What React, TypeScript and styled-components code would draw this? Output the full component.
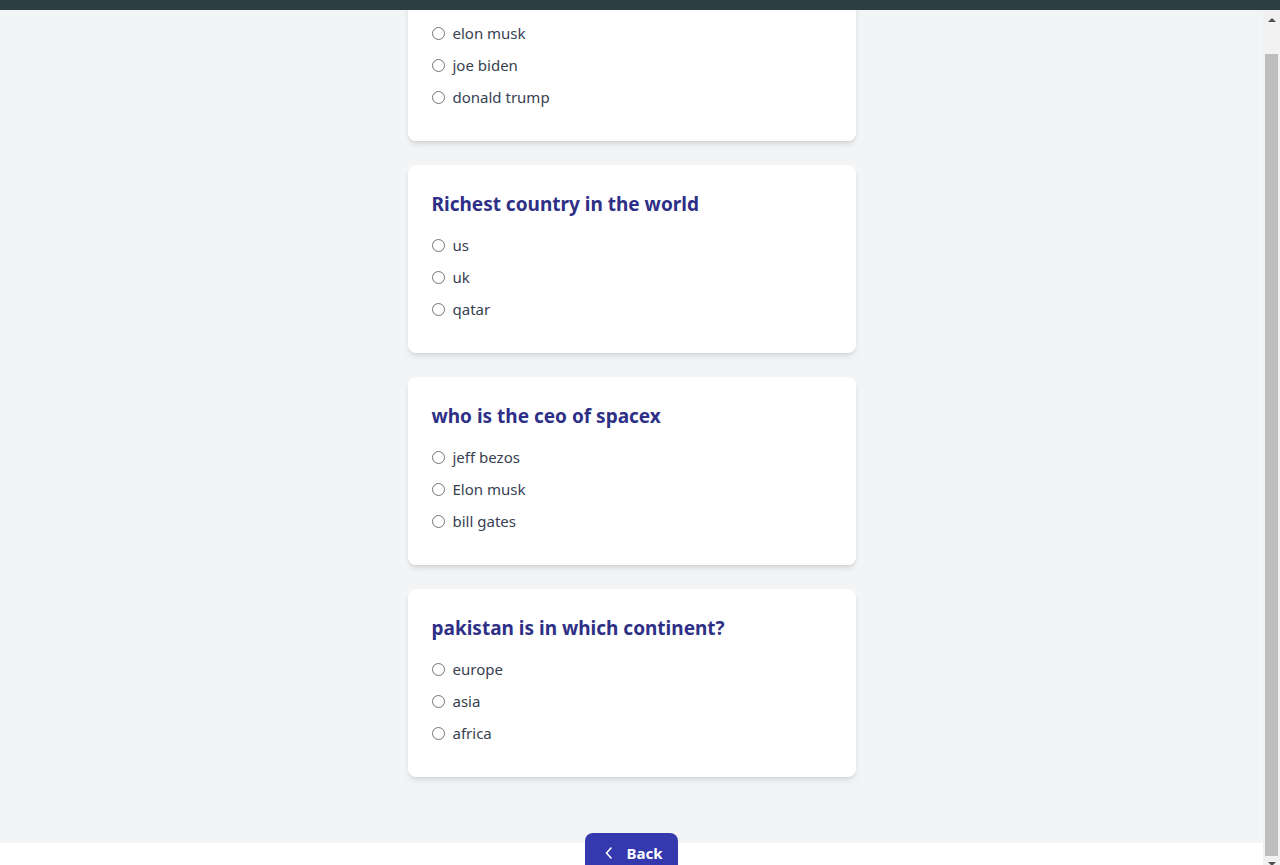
import React, { useLayoutEffect, useRef } from "react";
import styled, { createGlobalStyle } from "styled-components";

const GlobalStyle = createGlobalStyle`
  *, *::before, *::after { box-sizing: border-box; }
  html, body { margin: 0; padding: 0; overflow: hidden; background: #ffffff; }
  body { font-family: "Segoe UI", "Noto Sans", sans-serif; }
`;

const Shell = styled.div`
  display: flex;
  flex-direction: column;
  height: 875px;
`;

const TopBar = styled.div`
  flex-shrink: 0;
  height: 10px;
  background: #2d3e42;
`;

const Body = styled.div`
  display: flex;
  height: 865px;
  flex-shrink: 0;
`;

const Scroller = styled.div`
  flex: 1;
  min-width: 0;
  overflow: hidden;
  background: #ffffff;
`;

/* drawn window scrollbar */
const Rail = styled.div`
  width: 17px;
  flex-shrink: 0;
  display: flex;
  flex-direction: column;
  background: #f1f1f1;
`;

const RailButton = styled.div<{ $h: number; $top: number }>`
  height: ${(p) => p.$h}px;
  flex-shrink: 0;
  display: flex;
  justify-content: center;
  padding-top: ${(p) => p.$top}px;
`;

const ArrowUp = styled.div`
  width: 0;
  height: 0;
  border-left: 4px solid transparent;
  border-right: 4px solid transparent;
  border-bottom: 4px solid #505050;
`;

const ArrowDown = styled.div`
  width: 0;
  height: 0;
  border-left: 4px solid transparent;
  border-right: 4px solid transparent;
  border-top: 4px solid #505050;
`;

const Track = styled.div`
  flex: 1;
  display: flex;
  flex-direction: column;
  padding: 27px 2px 0;
`;

const Thumb = styled.div`
  flex: 1;
  background: #bdbdbd;
`;

const Main = styled.main`
  background: #f3f4f6;
  padding: 24px 0 66px;
  display: flex;
  flex-direction: column;
  align-items: center;
  gap: 24px;
`;

const Card = styled.section`
  width: 448px;
  background: #ffffff;
  border-radius: 8px;
  padding: 24px;
  box-shadow: 0 4px 6px -1px rgba(0, 0, 0, 0.1), 0 2px 4px -2px rgba(0, 0, 0, 0.1);
`;

const Title = styled.h2`
  margin: 0 0 16px;
  padding-top: 1px;
  height: 28px;
  font-size: 19px;
  line-height: 28px;
  font-weight: 700;
  color: #2e2f86;
`;

const Option = styled.label`
  display: flex;
  align-items: center;
  height: 24px;
  margin-bottom: 8px;
  font-size: 15px;
  line-height: 24px;
  color: #374151;
`;

const Radio = styled.input.attrs({ type: "radio" })`
  width: 13px;
  height: 13px;
  margin: 0 8px 0 0;
  accent-color: #555;
`;

const Footer = styled.footer`
  background: #ffffff;
  display: flex;
  justify-content: center;
  padding-bottom: 24px;
`;

const BackButton = styled.button`
  margin-top: -10px;
  display: inline-flex;
  align-items: center;
  gap: 13px;
  padding: 8px 15px 8px 20px;
  background: #3439ae;
  color: #ffffff;
  border: none;
  border-radius: 8px;
  font-family: inherit;
  font-size: 15px;
  line-height: 24px;
  font-weight: 700;
  cursor: pointer;
`;

type Question = { id: string; title: string; options: string[] };

const questions: Question[] = [
  { id: "q1", title: "who is the richest person in the world", options: ["elon musk", "joe biden", "donald trump"] },
  { id: "q2", title: "Richest country in the world", options: ["us", "uk", "qatar"] },
  { id: "q3", title: "who is the ceo of spacex", options: ["jeff bezos", "Elon musk", "bill gates"] },
  { id: "q4", title: "pakistan is in which continent?", options: ["europe", "asia", "africa"] },
];

const ChevronLeft = () => (
  <svg width="8" height="14" viewBox="0 0 8 14" fill="none">
    <polyline points="6,2 1.5,7 6,12" stroke="#ffffff" strokeWidth="1.6" strokeLinecap="round" strokeLinejoin="round" />
  </svg>
);

export default function App() {
  const ref = useRef<HTMLDivElement>(null);
  useLayoutEffect(() => {
    if (ref.current) ref.current.scrollTop = 81;
  }, []);

  return (
    <>
      <GlobalStyle />
      <Shell>
        <TopBar />
        <Body>
          <Scroller ref={ref}>
            <Main>
              {questions.map((q) => (
                <Card key={q.id}>
                  <Title>{q.title}</Title>
                  {q.options.map((o) => (
                    <Option key={o}>
                      <Radio name={q.id} value={o} />
                      {o}
                    </Option>
                  ))}
                </Card>
              ))}
            </Main>
            <Footer>
              <BackButton>
                <ChevronLeft />
                Back
              </BackButton>
            </Footer>
          </Scroller>
          <Rail>
            <RailButton $h={17} $top={8}>
              <ArrowUp />
            </RailButton>
            <Track>
              <Thumb />
            </Track>
            <RailButton $h={19} $top={6}>
              <ArrowDown />
            </RailButton>
          </Rail>
        </Body>
      </Shell>
    </>
  );
}
